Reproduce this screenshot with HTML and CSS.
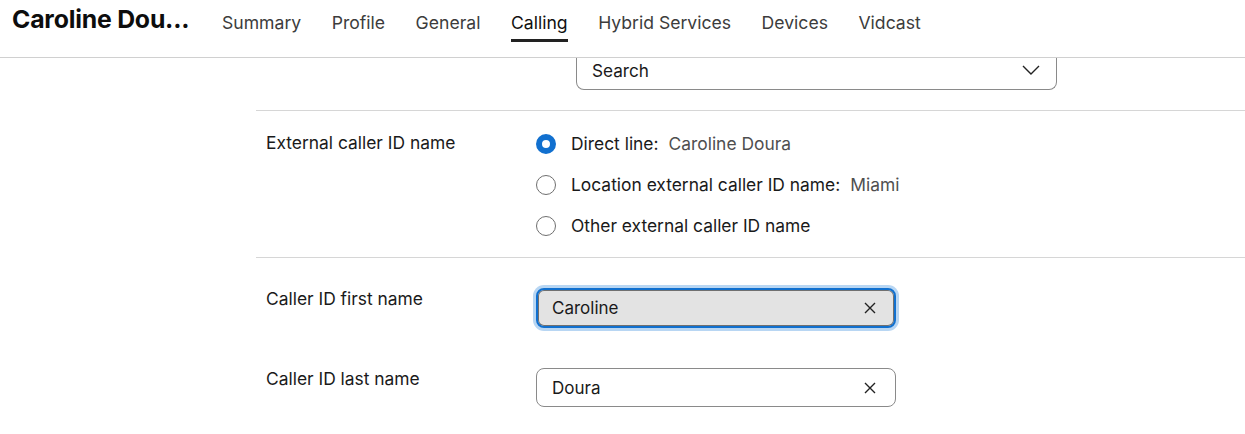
FILE: index.html
```html
<!DOCTYPE html>
<html>
<head>
<meta charset="utf-8">
<link rel="stylesheet" href="styles.css">
</head>
<body>
<header class="topbar">
  <h1 class="title">Caroline Dou...</h1>
  <nav class="tabs">
    <span class="tab">Summary</span>
    <span class="tab">Profile</span>
    <span class="tab">General</span>
    <span class="tab active">Calling</span>
    <span class="tab">Hybrid Services</span>
    <span class="tab">Devices</span>
    <span class="tab">Vidcast</span>
  </nav>
</header>
<main class="content">
  <section class="section sec-search">
    <div class="dropdown">
      <span>Search</span>
      <svg class="chev" width="18" height="10" viewBox="0 0 18 10"><path d="M1 1l8 8 8-8" fill="none" stroke="#222" stroke-width="1.4"/></svg>
    </div>
  </section>
  <section class="section sec-radio">
    <div class="label">External caller ID name</div>
    <div class="radios">
      <label class="radio"><span class="dot checked"></span><span>Direct line:</span><span class="val">Caroline Doura</span></label>
      <label class="radio"><span class="dot"></span><span>Location external caller ID name:</span><span class="val">Miami</span></label>
      <label class="radio"><span class="dot"></span><span>Other external caller ID name</span></label>
    </div>
  </section>
  <section class="section sec-inputs">
    <div class="row">
      <div class="label">Caller ID first name</div>
      <div class="input focused"><span>Caroline</span>
        <svg class="x" width="12" height="12" viewBox="0 0 12 12"><path d="M1 1l10 10M11 1L1 11" stroke="#222" stroke-width="1.4"/></svg>
      </div>
    </div>
    <div class="row">
      <div class="label">Caller ID last name</div>
      <div class="input"><span>Doura</span>
        <svg class="x" width="12" height="12" viewBox="0 0 12 12"><path d="M1 1l10 10M11 1L1 11" stroke="#222" stroke-width="1.4"/></svg>
      </div>
    </div>
  </section>
</main>
</body>
</html>
```
FILE: styles.css
```css
* { box-sizing: border-box; }
html, body { margin: 0; padding: 0; background: #fff; }
body {
  font-family: Inter, "Noto Sans", sans-serif;
  color: #1a1a1a;
  width: 1245px;
  height: 434px;
  overflow: hidden;
}
.topbar {
  display: flex;
  align-items: flex-start;
  height: 58px;
  border-bottom: 1px solid #d0d0d0;
  padding-left: 12px;
}
.title {
  margin: 4px 0 0 0;
  font-size: 24.8px;
  font-weight: 700;
  letter-spacing: -0.2px;
  color: #0d0d0d;
  width: 210px;
  line-height: 30px;
}
.tabs {
  display: flex;
  gap: 30.5px;
  margin-top: 11px;
}
.tab {
  font-size: 17.6px;
  color: #3c3c3c;
  line-height: 24px;
  padding-bottom: 4px;
  border-bottom: 3px solid transparent;
}
.tab.active {
  color: #111;
  border-bottom-color: #222;
}
.content {
  margin-left: 256px;
}
.section {
  border-bottom: 1px solid #d6d6d6;
}
.sec-search {
  height: 53px;
  padding-left: 320px;
}
.dropdown {
  width: 481px;
  height: 32px;
  border: 1px solid #8a8a8a;
  border-top: none;
  border-radius: 0 0 8px 8px;
  display: flex;
  align-items: center;
  justify-content: space-between;
  padding: 0 16px 6px 15px;
  font-size: 17.2px;
  color: #1a1a1a;
}
.chev { margin-bottom: 1px; }
.sec-radio {
  display: flex;
  height: 147px;
  padding-top: 21px;
}
.label {
  width: 280px;
  padding-left: 10px;
  font-size: 17.4px;
  line-height: 22px;
  color: #1a1a1a;
}
.radios {
  display: flex;
  flex-direction: column;
  gap: 19px;
  padding-top: 1px;
}
.radio {
  display: flex;
  align-items: center;
  font-size: 17.4px;
  line-height: 22px;
  gap: 6px;
}
.dot {
  width: 20px;
  height: 20px;
  border-radius: 50%;
  border: 1px solid #6f6f6f;
  margin-right: 9px;
  flex: none;
}
.dot.checked {
  border: 6px solid #1170cf;
  background: #fff;
}
.val { color: #4f4f4f; margin-left: 4px; }
.sec-inputs {
  border-bottom: none;
  padding-top: 30px;
  display: flex;
  flex-direction: column;
  gap: 40px;
}
.row {
  display: flex;
  align-items: flex-start;
}
.input {
  width: 360px;
  height: 39px;
  border: 1px solid #8a8a8a;
  border-radius: 8px;
  display: flex;
  align-items: center;
  justify-content: space-between;
  padding: 0 19px 0 15px;
  font-size: 17px;
  color: #1a1a1a;
}
.input.focused {
  height: 40px;
  background: #e3e3e3;
  border: 2px solid #1170cf;
  box-shadow: 0 0 0 3px #b8d6f3, inset 0 0 0 1px #707070;
  padding-left: 14px;
  padding-right: 18px;
}
```
